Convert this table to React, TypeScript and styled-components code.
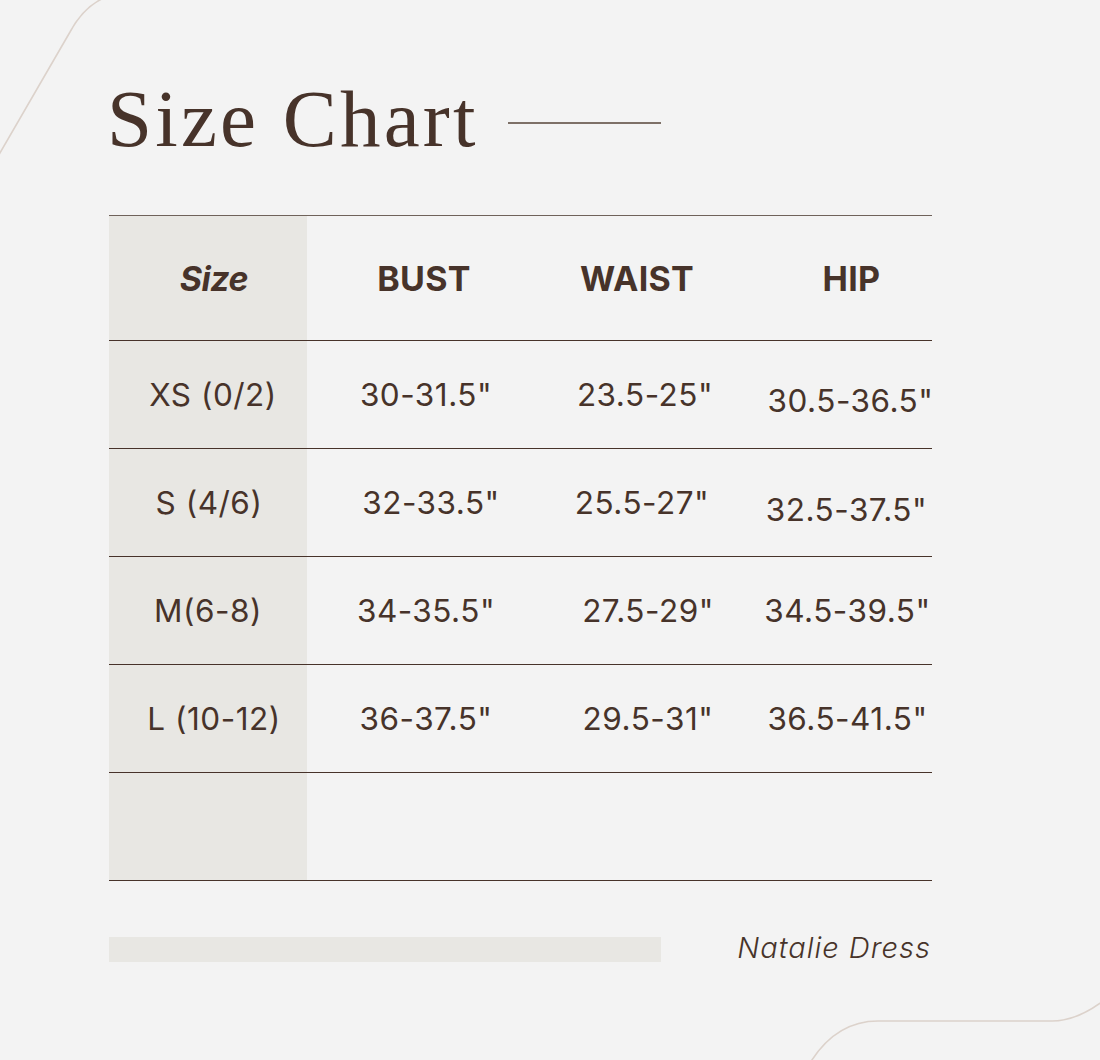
import React from "react";
import styled, { createGlobalStyle } from "styled-components";

const INK = "#47332a";

const Global = createGlobalStyle`
  html, body { margin: 0; padding: 0; background: #f3f3f3; }
  body { font-family: "Inter", "Liberation Sans", sans-serif; color: ${INK}; }
`;

const Page = styled.div`
  position: relative;
  width: 1100px;
  height: 1060px;
  overflow: hidden;
  background: #f3f3f3;
  box-sizing: border-box;
  padding: 72px 0 0 109px;
`;

const Decor = styled.svg`
  position: absolute;
  left: 0;
  top: 0;
  pointer-events: none;
`;

const TitleRow = styled.div`
  display: flex;
  align-items: center;
  gap: 29px;
  margin-left: -2px;
  height: 100px;
`;

const Title = styled.h1`
  margin: 0 0 6px 0;
  font-family: "Liberation Serif", "Times New Roman", serif;
  font-weight: 400;
  font-size: 81px;
  line-height: 1;
  letter-spacing: 3.2px;
  white-space: nowrap;
  color: ${INK};
`;

const TitleRule = styled.div`
  width: 153px;
  height: 1.5px;
  background: #7d7067;
  margin-top: 2px;
`;

const Table = styled.div`
  width: 823px;
  margin-top: 43px;
  border-top: 1px solid #6f625a;
`;

const Row = styled.div<{ $h: number }>`
  display: grid;
  grid-template-columns: 198px 238px 200px 187px;
  height: ${(p) => p.$h}px;
  border-bottom: 1px solid ${INK};
  box-sizing: border-box;
`;

const Cell = styled.div<{ $shade?: boolean; $pad?: number }>`
  display: flex;
  align-items: center;
  justify-content: center;
  white-space: nowrap;
  min-width: 0;
  background: ${(p) => (p.$shade ? "#e8e7e3" : "transparent")};
  padding-left: ${(p) => p.$pad ?? 0}px;
`;

const HeadText = styled.span<{ $italic?: boolean; $dx?: number }>`
  font-family: "Inter", "Liberation Sans", sans-serif;
  font-weight: 700;
  font-size: 34px;
  font-style: ${(p) => (p.$italic ? "italic" : "normal")};
  letter-spacing: ${(p) => (p.$italic ? "-0.5px" : "0.3px")};
  transform: translateX(${(p) => p.$dx ?? 0}px);
  color: ${INK};
`;

const DataText = styled.span<{ $dx?: number; $dy?: number }>`
  font-family: "Inter", "Liberation Sans", sans-serif;
  font-weight: 400;
  font-size: 31.5px;
  letter-spacing: 0.5px;
  white-space: nowrap;
  color: ${INK};
  transform: translate(${(p) => p.$dx ?? 0}px, ${(p) => p.$dy ?? 0}px);
`;

const Footer = styled.div`
  display: flex;
  align-items: center;
  justify-content: space-between;
  width: 823px;
  margin-top: 53px;
`;

const Bar = styled.div`
  width: 552px;
  height: 25px;
  background: #e8e7e3;
`;

const Product = styled.span`
  font-family: "Inter", "Liberation Sans", sans-serif;
  font-style: italic;
  font-weight: 300;
  font-size: 29px;
  letter-spacing: 1px;
  margin-right: 1px;
  margin-top: -4px;
  white-space: nowrap;
  color: ${INK};
`;

type Val = { t: string; dx?: number; dy?: number };
const rows: Val[][] = [
  [{ t: "XS (0/2)", dx: 5 }, { t: '30-31.5"' }, { t: '23.5-25"' }, { t: '30.5-36.5"', dx: 1, dy: 6 }],
  [{ t: "S (4/6)", dx: 1 }, { t: '32-33.5"', dx: 5 }, { t: '25.5-27"', dx: -3 }, { t: '32.5-37.5"', dx: -3, dy: 7 }],
  [{ t: "M(6-8)" }, { t: '34-35.5"' }, { t: '27.5-29"', dx: 3 }, { t: '34.5-39.5"', dx: -2 }],
  [{ t: "L (10-12)", dx: 6 }, { t: '36-37.5"' }, { t: '29.5-31"', dx: 3 }, { t: '36.5-41.5"', dx: -2 }],
];

export default function App() {
  return (
    <>
      <Global />
      <Page>
        <Decor width="1100" height="1060" viewBox="0 0 1100 1060">
          <path d="M -3 158 L 70 32 Q 84 6 106 -3" fill="none" stroke="#dcd2cb" strokeWidth="1.6" />
          <path d="M 810 1063 Q 836 1021 878 1021 L 1052 1021 Q 1076 1021 1103 1001" fill="none" stroke="#dcd2cb" strokeWidth="1.6" />
        </Decor>
        <TitleRow>
          <Title>Size Chart</Title>
          <TitleRule />
        </TitleRow>
        <Table>
          <Row $h={125}>
            <Cell $shade>
              <HeadText $italic $dx={6}>Size</HeadText>
            </Cell>
            <Cell>
              <HeadText $dx={-2}>BUST</HeadText>
            </Cell>
            <Cell>
              <HeadText $dx={-8}>WAIST</HeadText>
            </Cell>
            <Cell $pad={22}>
              <HeadText $dx={2}>HIP</HeadText>
            </Cell>
          </Row>
          {rows.map((r, i) => (
            <Row $h={108} key={i}>
              {r.map((v, j) => (
                <Cell key={j} $shade={j === 0} $pad={j === 3 ? 22 : 0}>
                  <DataText $dx={v.dx} $dy={v.dy}>{v.t}</DataText>
                </Cell>
              ))}
            </Row>
          ))}
          <Row $h={108}>
            <Cell $shade />
            <Cell />
            <Cell />
            <Cell />
          </Row>
        </Table>
        <Footer>
          <Bar />
          <Product>Natalie Dress</Product>
        </Footer>
      </Page>
    </>
  );
}
